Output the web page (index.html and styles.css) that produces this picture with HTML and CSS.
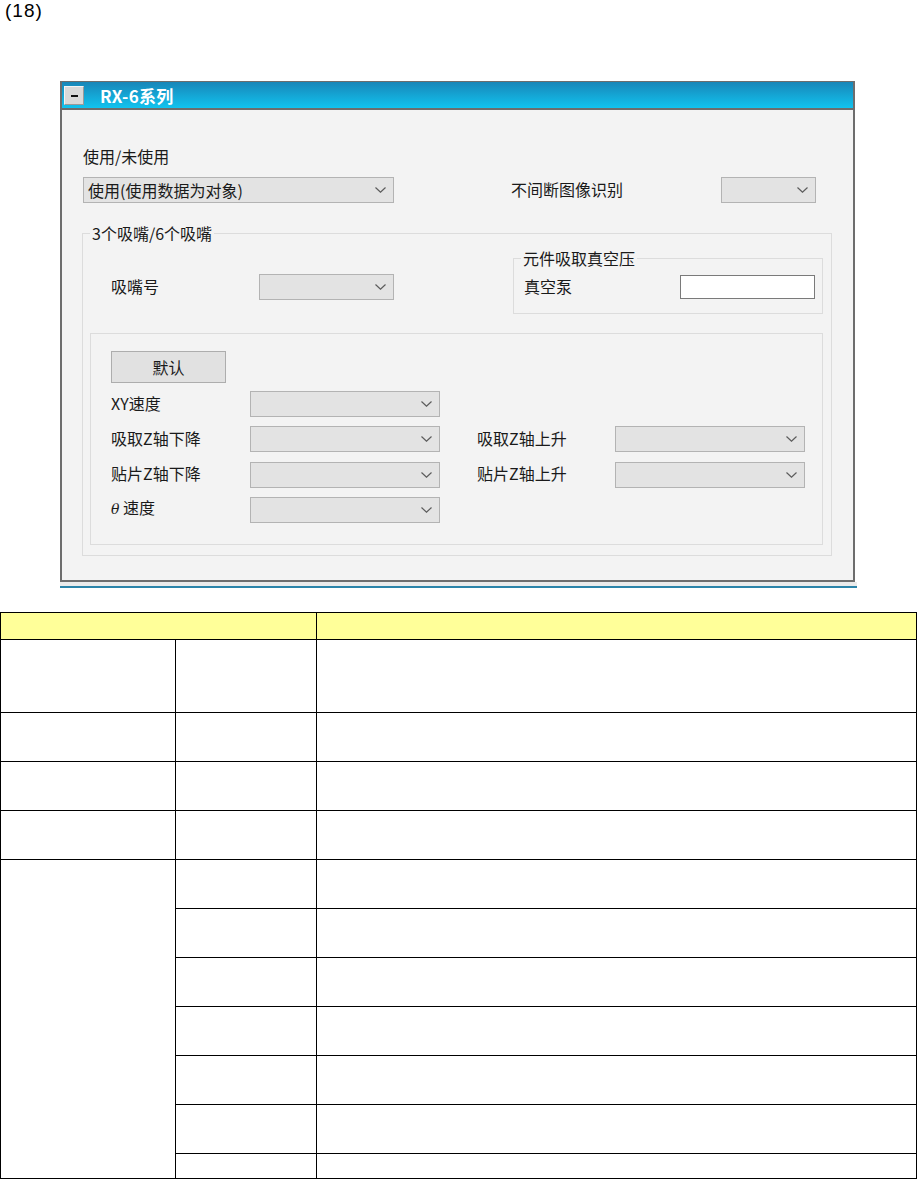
FILE: index.html
```html
<!DOCTYPE html>
<html>

	<head>
		<meta charset="UTF-8">
		<title>RX-6系列</title>
		<link rel="stylesheet" href="styles.css">
	</head>

	<body>
		<div class="fig-no">(18)</div>

		<div class="window">
			<div class="panel">
				<div class="panel-title">
					<span class="collapse-btn"><i></i></span>
					<span class="title-text">RX-6系列</span>
				</div>

				<div class="panel-body">
					<div class="lbl top-lbl">使用/未使用</div>

					<div class="use-row">
						<div class="combo combo-use">
							<span>使用(使用数据为对象)</span>
							<svg width="11" height="6" viewBox="0 0 11 6"><polyline points="0.5,0.5 5.5,5.2 10.5,0.5" /></svg>
						</div>
						<div class="lbl img-lbl">不间断图像识别</div>
						<div class="combo combo-img">
							<svg width="11" height="6" viewBox="0 0 11 6"><polyline points="0.5,0.5 5.5,5.2 10.5,0.5" /></svg>
						</div>
					</div>

					<fieldset class="grp grp-nozzle">
						<legend>3个吸嘴/6个吸嘴</legend>

						<div class="nozzle-row">
							<div class="nozzle-no">
								<span class="lbl">吸嘴号</span>
								<div class="combo combo-nz">
									<svg width="11" height="6" viewBox="0 0 11 6"><polyline points="0.5,0.5 5.5,5.2 10.5,0.5" /></svg>
								</div>
							</div>

							<fieldset class="grp grp-vac">
								<legend>元件吸取真空压</legend>
								<div class="vac-row">
									<span class="lbl">真空泵</span>
									<div class="textbox"></div>
								</div>
							</fieldset>
						</div>

						<div class="speed-box">
							<button class="btn-default">默认</button>

							<div class="speed-grid">
								<span class="lbl">XY速度</span>
								<div class="combo combo-sp">
									<svg width="11" height="6" viewBox="0 0 11 6"><polyline points="0.5,0.5 5.5,5.2 10.5,0.5" /></svg>
								</div>
								<span></span>
								<span></span>

								<span class="lbl">吸取Z轴下降</span>
								<div class="combo combo-sp">
									<svg width="11" height="6" viewBox="0 0 11 6"><polyline points="0.5,0.5 5.5,5.2 10.5,0.5" /></svg>
								</div>
								<span class="lbl r-lbl">吸取Z轴上升</span>
								<div class="combo combo-sp">
									<svg width="11" height="6" viewBox="0 0 11 6"><polyline points="0.5,0.5 5.5,5.2 10.5,0.5" /></svg>
								</div>

								<span class="lbl">贴片Z轴下降</span>
								<div class="combo combo-sp">
									<svg width="11" height="6" viewBox="0 0 11 6"><polyline points="0.5,0.5 5.5,5.2 10.5,0.5" /></svg>
								</div>
								<span class="lbl r-lbl">贴片Z轴上升</span>
								<div class="combo combo-sp">
									<svg width="11" height="6" viewBox="0 0 11 6"><polyline points="0.5,0.5 5.5,5.2 10.5,0.5" /></svg>
								</div>

								<span class="lbl"><em>θ</em> 速度</span>
								<div class="combo combo-sp">
									<svg width="11" height="6" viewBox="0 0 11 6"><polyline points="0.5,0.5 5.5,5.2 10.5,0.5" /></svg>
								</div>
								<span></span>
								<span></span>
							</div>
						</div>
					</fieldset>
				</div>
			</div>
			<div class="panel-strip"></div>
		</div>

		<table class="spec">
			<colgroup>
				<col class="c1">
				<col class="c2">
				<col class="c3">
			</colgroup>
			<tr class="head">
				<th colspan="2"></th>
				<th></th>
			</tr>
			<tr class="tall">
				<td></td>
				<td></td>
				<td></td>
			</tr>
			<tr>
				<td></td>
				<td></td>
				<td></td>
			</tr>
			<tr>
				<td></td>
				<td></td>
				<td></td>
			</tr>
			<tr>
				<td></td>
				<td></td>
				<td></td>
			</tr>
			<tr>
				<td rowspan="7"></td>
				<td></td>
				<td></td>
			</tr>
			<tr>
				<td></td>
				<td></td>
			</tr>
			<tr>
				<td></td>
				<td></td>
			</tr>
			<tr>
				<td></td>
				<td></td>
			</tr>
			<tr>
				<td></td>
				<td></td>
			</tr>
			<tr>
				<td></td>
				<td></td>
			</tr>
			<tr class="short">
				<td></td>
				<td></td>
			</tr>
		</table>
	</body>

</html>
```

FILE: styles.css
```css
* {
	margin: 0;
	padding: 0;
	box-sizing: border-box;
}

body {
	background: #fff;
	font-family: "Liberation Sans", Arial, sans-serif;
}

.fig-no {
	height: 22px;
	padding-left: 5px;
	font-size: 19px;
	line-height: 22px;
	letter-spacing: 1px;
	color: #000;
}

/* ---- panel window ---- */

.window {
	margin-top: 59px;
	margin-left: 60px;
	width: 797px;
}

.panel {
	width: 795px;
	border: 2px solid #6d6d6d;
	border-top-width: 1px;
	background: #f3f3f3;
}

.panel-title {
	display: flex;
	align-items: center;
	height: 28px;
	padding-left: 2px;
	border-bottom: 2px solid #6d6d6d;
	background: linear-gradient(#1886b8, #11c3ef);
}

.collapse-btn {
	display: flex;
	align-items: flex-end;
	justify-content: center;
	width: 20px;
	height: 19px;
	padding-bottom: 7px;
	border: 1px solid #f4f4f4;
	border-right-color: #9a9a9a;
	border-bottom-color: #9a9a9a;
	background: #d9d9d9;
}

.collapse-btn i {
	display: block;
	width: 7px;
	height: 2px;
	background: #111;
}

.title-text {
	margin-left: 16px;
	font-family: "Noto Sans CJK SC", "Liberation Sans", sans-serif;
	font-size: 17px;
	font-weight: bold;
	color: #fff;
	letter-spacing: 0.3px;
}

.panel-body {
	height: 470px;
	padding: 37px 21px 0 20px;
}

.lbl {
	padding-bottom: 3px;
	font-family: "Noto Sans CJK SC", "Liberation Sans", sans-serif;
	font-size: 16px;
	line-height: 20px;
	color: #1a1a1a;
	white-space: nowrap;
}

.lbl em {
	font-style: italic;
	font-family: "DejaVu Serif", serif;
	font-size: 14px;
}

.top-lbl {
	height: 20px;
	margin-left: 1px;
	padding-bottom: 0;
	line-height: 18px;
}

/* ---- combo boxes ---- */

.combo {
	display: flex;
	align-items: center;
	justify-content: space-between;
	height: 26px;
	padding: 0 7px 0 4px;
	border: 1px solid #b3b3b3;
	background: #e3e3e3;
}

.combo span {
	font-family: "Noto Sans CJK SC", "Liberation Sans", sans-serif;
	font-size: 16px;
	color: #1a1a1a;
	white-space: nowrap;
}

.combo svg {
	margin-left: auto;
	fill: none;
	stroke: #5c5c5c;
	stroke-width: 1.2;
}

.use-row {
	display: flex;
	align-items: center;
	margin-top: 10px;
	margin-left: 1px;
}

.combo-use {
	width: 311px;
}

.img-lbl {
	margin-left: 117px;
}

.combo-img {
	width: 95px;
	margin-left: auto;
	margin-right: 16px;
}

/* ---- group boxes ---- */

.grp {
	border: 1px solid #dcdcdc;
}

.grp legend {
	padding: 0 2px;
	font-family: "Noto Sans CJK SC", "Liberation Sans", sans-serif;
	font-size: 16px;
	line-height: 20px;
	color: #1a1a1a;
}

.grp-nozzle {
	margin-top: 20px;
	width: 750px;
	padding: 5px 8px 10px 7px;
}

.nozzle-row {
	display: flex;
	align-items: flex-start;
}

.nozzle-no {
	display: flex;
	align-items: center;
	margin-top: 26px;
	padding-left: 21px;
}

.nozzle-no .lbl {
	width: 148px;
}

.combo-nz {
	width: 135px;
}

.grp-vac {
	width: 310px;
	margin-left: auto;
	padding: 7px 7px 14px 7px;
}

.vac-row {
	display: flex;
	align-items: center;
	justify-content: space-between;
	padding-left: 3px;
}

.textbox {
	width: 135px;
	height: 24px;
	border: 1px solid #7a7a7a;
	background: #fff;
}

/* ---- speed settings ---- */

.speed-box {
	margin-top: 19px;
	padding: 17px 0 21px 20px;
	border: 1px solid #dcdcdc;
}

.btn-default {
	display: block;
	width: 115px;
	height: 32px;
	border: 1px solid #adadad;
	background: #e1e1e1;
	font-family: "Noto Sans CJK SC", "Liberation Sans", sans-serif;
	font-size: 16px;
	color: #1a1a1a;
}

.speed-grid {
	display: grid;
	grid-template-columns: 139px 190px 175px 190px;
	grid-auto-rows: 26px;
	row-gap: 9.33px;
	align-items: center;
	margin-top: 8px;
}

.r-lbl {
	padding-left: 37px;
}

.panel-strip {
	height: 6px;
	width: 797px;
	background: linear-gradient(#ebebeb 0, #ebebeb 4px, #2c84a9 4px);
}

/* ---- spec table ---- */

.spec {
	margin-top: 24px;
	width: 917px;
	table-layout: fixed;
	border-collapse: collapse;
}

.spec .c1 {
	width: 175px;
}

.spec .c2 {
	width: 141px;
}

.spec th,
.spec td {
	border: 1px solid #000;
	padding: 0;
}

.spec tr {
	height: 49px;
}

.spec tr.head {
	height: 27px;
}

.spec tr.head th {
	background: #ffff99;
}

.spec tr.tall {
	height: 73px;
}

.spec tr.short {
	height: 25px;
}
```
